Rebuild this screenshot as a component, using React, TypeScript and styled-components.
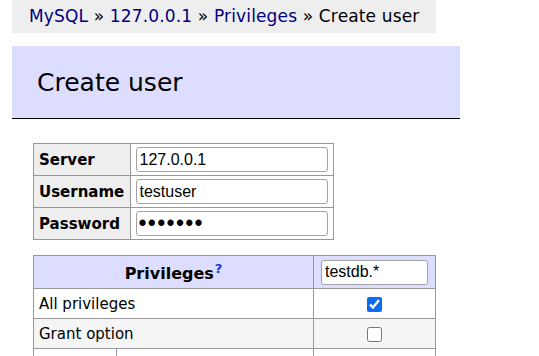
import React from 'react'
import styled, { createGlobalStyle } from 'styled-components'

const GlobalStyle = createGlobalStyle`
  html, body {
    margin: 0;
    padding: 0;
    background: #fff;
  }
  body {
    font-family: "DejaVu Sans", Verdana, sans-serif;
    font-size: 15px;
    color: #000;
  }
`

const Page = styled.div`
  padding: 0 0 20px 12px;
`

const Breadcrumb = styled.p`
  margin: 0;
  width: 407px;
  height: 33px;
  padding-left: 17px;
  line-height: 32px;
  font-size: 17px;
  letter-spacing: 0.15px;
  background: #eee;
  white-space: nowrap;

  a {
    color: navy;
    text-decoration: none;
  }
`

const Title = styled.h1`
  margin: 13px 0 0;
  width: 423px;
  height: 70px;
  padding: 2px 0 0 25px;
  line-height: 70px;
  font-size: 25px;
  font-weight: normal;
  background: #ddf;
  border-bottom: 1px solid #000;
`

const Form = styled.form`
  padding-left: 21px;
`

const Grid = styled.table<{ $width: number; $top: number }>`
  border-collapse: collapse;
  border: 1px solid #999;
  width: ${({ $width }) => $width}px;
  margin-top: ${({ $top }) => $top}px;
  table-layout: fixed;

  th, td {
    border: 1px solid #999;
    vertical-align: middle;
  }
`

const Label = styled.th`
  width: 86px;
  padding: 0 5px;
  text-align: left;
  font-weight: bold;
  background: #eee;
  white-space: nowrap;
`

const Field = styled.td`
  padding: 3px 5px 3px 4px;
`

const TextInput = styled.input<{ $width?: number }>`
  box-sizing: border-box;
  display: block;
  width: ${({ $width }) => $width ?? 192}px;
  height: 25px;
  margin: 0 auto;
  padding: 1px 3px;
  font-family: "Liberation Sans", Arial, sans-serif;
  font-size: 16px;
  color: #000;
  background: #fff;
  border: 1px solid #a3a3a3;
  border-radius: 3px;
  outline: none;

  &[type='password'] {
    padding: 0 3px 0 2px;
    font-size: 23px;
    letter-spacing: 1.3px;
  }
`

const HeadRow = styled.tr`
  background: #ddf;
`

const HeadCell = styled.th<{ $input?: boolean }>`
  height: ${({ $input }) => ($input ? 26 : 32)}px;
  padding: ${({ $input }) => ($input ? '3px 0' : '0 6px')};
  text-align: center;
  font-size: 16px;
  font-weight: bold;
`

const Help = styled.sup`
  color: #1f2fe0;
  font-size: 13px;
  margin-left: 1px;
`

const PrivRow = styled.tr`
  background: #fff;
  &:nth-child(even) {
    background: #f5f5f5;
  }
`

const Name = styled.td`
  height: 29px;
  padding: 0 5px;
  white-space: nowrap;
`

const Check = styled.td`
  text-align: center;
  padding: 0;
`

const Box = styled.input`
  width: 15px;
  height: 15px;
  margin: 0;
  vertical-align: middle;
  accent-color: #0b6cf0;
`

const credentials = [
  { label: 'Server', value: '127.0.0.1', type: 'text' },
  { label: 'Username', value: 'testuser', type: 'text' },
  { label: 'Password', value: 'secret1', type: 'password' },
]

const privileges = [
  { name: 'All privileges', checked: true },
  { name: 'Grant option', checked: false },
]

export default function App() {
  return (
    <>
      <GlobalStyle />
      <Page>
        <Breadcrumb>
          <a href="#">MySQL</a> » <a href="#">127.0.0.1</a> » <a href="#">Privileges</a> » Create user
        </Breadcrumb>
        <Title>Create user</Title>
        <Form>
          <Grid $width={301} $top={24}>
            <tbody>
              {credentials.map(c => (
                <tr key={c.label}>
                  <Label>{c.label}</Label>
                  <Field>
                    <TextInput type={c.type} defaultValue={c.value} />
                  </Field>
                </tr>
              ))}
            </tbody>
          </Grid>
          <Grid $width={403} $top={15}>
            <colgroup>
              <col style={{ width: 83 }} />
              <col style={{ width: 197 }} />
              <col style={{ width: 122 }} />
            </colgroup>
            <thead>
              <HeadRow>
                <HeadCell colSpan={2}>
                  Privileges<Help>?</Help>
                </HeadCell>
                <HeadCell $input>
                  <TextInput $width={107} defaultValue="testdb.*" />
                </HeadCell>
              </HeadRow>
            </thead>
            <tbody>
              {privileges.map(p => (
                <PrivRow key={p.name}>
                  <Name colSpan={2}>{p.name}</Name>
                  <Check>
                    <Box type="checkbox" defaultChecked={p.checked} />
                  </Check>
                </PrivRow>
              ))}
              <PrivRow>
                <Name />
                <Name />
                <Check />
              </PrivRow>
            </tbody>
          </Grid>
        </Form>
      </Page>
    </>
  )
}
